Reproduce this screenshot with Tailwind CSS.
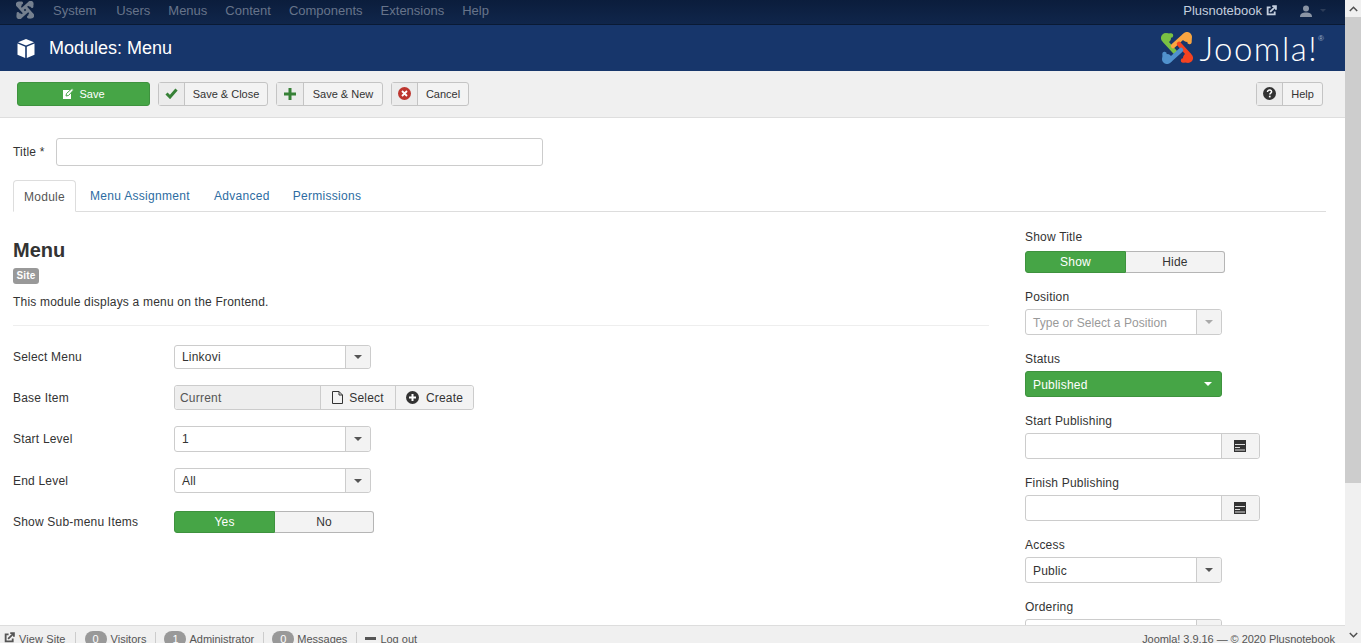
<!DOCTYPE html>
<html lang="en">
<head>
  <meta charset="UTF-8">
  <title>Modules: Menu</title>
  <script src="https://cdn.jsdelivr.net/npm/@tailwindcss/browser@4"></script>
</head>
<body class="bg-white text-[#333] font-['Liberation_Sans',Arial,sans-serif] text-[13px]">
  <div class="relative flex w-[1361px] h-[643px] overflow-hidden">
    <div class="w-[1345px] h-[643px] overflow-hidden flex flex-col shrink-0">

      <!-- Top nav -->
      <div class="h-[25px] shrink-0 flex items-center bg-gradient-to-b from-[#0b1d3c] to-[#10264b] border-b border-[#0a1a34] text-[13px] text-[#67748a] pb-[3px]">
        <svg class="ml-[16px] -mt-[1px] w-[18px] h-[18px]" viewBox="0 0 32 32" fill="#75808f" stroke="#75808f" stroke-width="5" stroke-linecap="round">
          <g><circle cx="5" cy="6" r="2.800" /><path fill="none" d="M10 3.500C6 3 3 6 4 9L14 20"/></g>
          <g transform="rotate(90 16 16)"><circle cx="5" cy="6" r="2.800"/><path fill="none" d="M10 3.500C6 3 3 6 4 9L14 20"/></g>
          <g transform="rotate(180 16 16)"><circle cx="5" cy="6" r="2.800"/><path fill="none" d="M10 3.500C6 3 3 6 4 9L14 20"/></g>
          <g transform="rotate(270 16 16)"><circle cx="5" cy="6" r="2.800"/><path fill="none" d="M10 3.500C6 3 3 6 4 9L14 20"/></g>
        </svg>
        <div class="ml-[19px] flex gap-[18px]">
          <span class="mr-[2px]">System</span><span>Users</span><span>Menus</span><span>Content</span><span>Components</span><span>Extensions</span><span>Help</span>
        </div>
        <div class="ml-auto flex items-center text-[#c3cede]">
          <span>Plusnotebook</span>
          <svg class="ml-[4px] w-[11px] h-[11px]" viewBox="0 0 12 12" fill="none" stroke="#c3cede" stroke-width="2"><path d="M9.500 7v3.200H1.800V2.500H5"/><path d="M4.500 7.500 10 2M6.800 1.200h4v4" /></svg>
          <svg class="ml-[23px] w-[12px] h-[12px]" viewBox="0 0 12 12" fill="#8a94a4"><circle cx="6" cy="3.400" r="3"/><path d="M0 12c0-3.500 2.500-4.500 6-4.500s6 1 6 4.500z"/></svg>
          <span class="ml-[8px] mr-[19px] w-0 h-0 border-x-[3px] border-x-transparent border-t-[3px] border-t-[#2c3c58]"></span>
        </div>
      </div>

      <!-- Title bar -->
      <div class="h-[46px] shrink-0 flex items-center bg-[#17366b] text-white">
        <svg class="ml-[17px] w-[18px] h-[19px]" viewBox="0 0 18 19" fill="#fff"><path d="M9 0 17 3.200 9 6.400 1 3.200z"/><path d="M.5 4.600 8.200 7.700V19L.5 15.800z"/><path d="M17.500 4.600 9.800 7.700V19l7.700-3.200z"/></svg>
        <h1 class="ml-[14px] text-[18px] leading-[24px]">Modules: Menu</h1>
        <div class="ml-auto mr-[21px] flex items-center h-[36px]">
          <svg class="w-[32px] h-[32px]" viewBox="0 0 32 32" stroke-width="4.500" stroke-linecap="round" fill="none">
            <g stroke="#7ac143"><circle cx="5" cy="6" r="2.800" fill="#7ac143"/><path d="M10 3.500C6 3 3 6 4 9L14 20"/></g>
            <g stroke="#f9a541" transform="rotate(90 16 16)"><circle cx="5" cy="6" r="2.800" fill="#f9a541"/><path d="M10 3.500C6 3 3 6 4 9L14 20"/></g>
            <g stroke="#f44321" transform="rotate(180 16 16)"><circle cx="5" cy="6" r="2.800" fill="#f44321"/><path d="M10 3.500C6 3 3 6 4 9L14 20"/></g>
            <g stroke="#5091cd" transform="rotate(270 16 16)"><circle cx="5" cy="6" r="2.800" fill="#5091cd"/><path d="M10 3.500C6 3 3 6 4 9L14 20"/></g>
          </svg>
          <span class="ml-[7px] font-['Lato',sans-serif] font-light text-[33px] leading-[36px] tracking-[1.500px]">Joomla!</span>
          <span class="text-[8px] text-[#9fb0c8] self-start mt-[3px]">®</span>
        </div>
      </div>

      <!-- Toolbar -->
      <div class="h-[47px] shrink-0 flex items-center bg-[#f0f0f0] border-b border-[#dedede] px-[17px] pb-[1px] gap-[8px] text-[11px]">
        <button class="w-[133px] h-[24px] flex items-center justify-center gap-[5px] rounded-[3px] bg-[#46a546] border border-[#3e923e] text-white">
          <svg class="w-[12px] h-[12px]" viewBox="0 0 12 12"><path d="M1 2h8v9H1z" fill="#fff"/><path d="M4 8l.5-2.500L10 .5l1.500 1.500L6.500 7.500z" fill="#fff" stroke="#46a546"/></svg>
          <span class="pt-[1px]">Save</span>
        </button>
        <button class="w-[110px] h-[24px] flex items-center rounded-[3px] bg-[#f3f3f3] border border-[#c4c4c4]">
          <span class="w-[26px] h-full flex items-center justify-center bg-[#ececec] border-r border-[#c4c4c4]">
            <svg class="w-[13px] h-[11px]" viewBox="0 0 13 11" fill="none" stroke="#378137" stroke-width="3"><path d="M1.500 5.500 5 9l6.500-7.500"/></svg>
          </span>
          <span class="flex-1 text-center pt-[2px]">Save &amp; Close</span>
        </button>
        <button class="w-[107px] h-[24px] flex items-center rounded-[3px] bg-[#f3f3f3] border border-[#c4c4c4]">
          <span class="w-[27px] h-full flex items-center justify-center bg-[#ececec] border-r border-[#c4c4c4]">
            <svg class="w-[12px] h-[12px]" viewBox="0 0 12 12" fill="#378137"><path d="M4.500 0h3v4.500H12v3H7.500V12h-3V7.500H0v-3h4.500z"/></svg>
          </span>
          <span class="flex-1 text-center pt-[2px]">Save &amp; New</span>
        </button>
        <button class="w-[78px] h-[24px] flex items-center rounded-[3px] bg-[#f3f3f3] border border-[#c4c4c4]">
          <span class="w-[26px] h-full flex items-center justify-center bg-[#ececec] border-r border-[#c4c4c4]">
            <svg class="w-[13px] h-[13px]" viewBox="0 0 13 13"><circle cx="6.500" cy="6.500" r="6.500" fill="#bd362f"/><path d="M4 4l5 5M9 4l-5 5" stroke="#fff" stroke-width="1.800"/></svg>
          </span>
          <span class="flex-1 text-center pt-[2px]">Cancel</span>
        </button>
        <button class="ml-auto mr-[5px] w-[67px] h-[24px] flex items-center rounded-[3px] bg-[#f3f3f3] border border-[#c4c4c4]">
          <span class="w-[26px] h-full flex items-center justify-center bg-[#ececec] border-r border-[#c4c4c4]">
            <svg class="w-[13px] h-[13px]" viewBox="0 0 13 13"><circle cx="6.500" cy="6.500" r="6.500" fill="#333"/><path d="M4.500 5c0-1.300 1-2 2.100-2s2 .7 2 1.800c0 1.400-1.800 1.300-1.800 2.700" fill="none" stroke="#fff" stroke-width="1.500"/><rect x="5.900" y="8.700" width="1.700" height="1.700" fill="#fff"/></svg>
          </span>
          <span class="flex-1 text-center pt-[2px]">Help</span>
        </button>
      </div>

      <!-- Form -->
      <div class="pl-[13px] pr-[19px] tracking-[0.2px]">
        <div class="mt-[20px] flex items-center h-[28px]">
          <label class="w-[43px] text-[12px]">Title *</label>
          <input type="text" class="w-[487px] h-[28px] bg-white border border-[#ccc] rounded-[3px]">
        </div>

        <!-- Tabs -->
        <div class="mt-[14px] h-[32px] flex border-b border-[#ddd] text-[12px] text-[#2d6ca2] tracking-[0.3px]">
          <span class="w-[63px] h-[32px] pt-[1px] flex items-center justify-center bg-white border border-[#ddd] border-b-white rounded-t-[4px] text-[#555]">Module</span>
          <span class="ml-[14px] h-[31px] pt-[1px] flex items-center">Menu Assignment</span>
          <span class="ml-[24px] h-[31px] pt-[1px] flex items-center">Advanced</span>
          <span class="ml-[23px] h-[31px] pt-[1px] flex items-center">Permissions</span>
        </div>

        <div class="flex">
          <!-- Module details -->
          <div class="w-[976px] shrink-0">
            <h2 class="mt-[26px] h-[24px] text-[20px] leading-[24px] font-bold tracking-normal">Menu</h2>
            <span class="mt-[6px] block w-[26px] h-[16px] rounded-[3px] bg-[#999] text-white text-[10px] font-bold leading-[16px] text-center">Site</span>
            <p class="mt-[9px] h-[17px] text-[12px] leading-[18px]">This module displays a menu on the Frontend.</p>
            <hr class="mt-[15px] border-[#eee]">

            <div class="mt-[19px] flex items-center text-[12px]">
              <label class="w-[161px]">Select Menu</label>
              <div class="w-[197px] h-[24px] flex bg-white border border-[#ccc] rounded-[3px]">
                <span class="flex-1 pl-[7px] leading-[22px]">Linkovi</span>
                <span class="w-[25px] flex items-center justify-center bg-[#f3f3f3] border-l border-[#ccc] rounded-r-[3px]"><i class="w-0 h-0 border-x-[4px] border-x-transparent border-t-[4px] border-t-[#555]"></i></span>
              </div>
            </div>
            <div class="mt-[16px] flex items-center text-[12px]">
              <label class="w-[161px]">Base Item</label>
              <div class="w-[300px] h-[25px] flex border border-[#ccc] rounded-[3px]">
                <span class="w-[145px] pl-[5px] leading-[24px] bg-[#eee] text-[#555] rounded-l-[3px]">Current</span>
                <span class="w-[75px] flex items-center justify-center gap-[6px] bg-[#f3f3f3] border-l border-[#ccc]">
                  <svg class="w-[11px] h-[13px]" viewBox="0 0 11 13" fill="none" stroke="#333"><path d="M.5.5h6.500l3.500 3.500v8.500H.5z"/><path d="M7 .5V4h3.500"/></svg>
                  Select
                </span>
                <span class="flex-1 flex items-center justify-center gap-[7px] bg-[#f3f3f3] border-l border-[#ccc] rounded-r-[3px]">
                  <svg class="w-[13px] h-[13px]" viewBox="0 0 13 13"><circle cx="6.500" cy="6.500" r="6.500" fill="#333"/><path d="M5.500 3h2v2.500H10v2H7.500V10h-2V7.500H3v-2h2.500z" fill="#fff"/></svg>
                  Create
                </span>
              </div>
            </div>
            <div class="mt-[16px] flex items-center text-[12px]">
              <label class="w-[161px]">Start Level</label>
              <div class="w-[197px] h-[26px] flex bg-white border border-[#ccc] rounded-[3px]">
                <span class="flex-1 pl-[7px] leading-[24px]">1</span>
                <span class="w-[25px] flex items-center justify-center bg-[#f3f3f3] border-l border-[#ccc] rounded-r-[3px]"><i class="w-0 h-0 border-x-[4px] border-x-transparent border-t-[4px] border-t-[#555]"></i></span>
              </div>
            </div>
            <div class="mt-[16px] flex items-center text-[12px]">
              <label class="w-[161px]">End Level</label>
              <div class="w-[197px] h-[25px] flex bg-white border border-[#ccc] rounded-[3px]">
                <span class="flex-1 pl-[7px] leading-[24px]">All</span>
                <span class="w-[25px] flex items-center justify-center bg-[#f3f3f3] border-l border-[#ccc] rounded-r-[3px]"><i class="w-0 h-0 border-x-[4px] border-x-transparent border-t-[4px] border-t-[#555]"></i></span>
              </div>
            </div>
            <div class="mt-[18px] flex items-center text-[12px]">
              <label class="w-[161px]">Show Sub-menu Items</label>
              <div class="w-[200px] h-[22px] flex text-center leading-[20px]">
                <span class="w-[101px] bg-[#46a546] border border-[#3e923e] rounded-l-[3px] text-white">Yes</span>
                <span class="flex-1 bg-[#f3f3f3] border border-l-0 border-[#b5b5b5] rounded-r-[3px]">No</span>
              </div>
            </div>
          </div>

          <!-- Sidebar -->
          <div class="ml-[36px] pt-[17px] text-[12px]">
            <label class="block h-[16px] leading-[16px]">Show Title</label>
            <div class="mt-[6px] w-[200px] h-[22px] flex text-center leading-[20px]">
              <span class="w-[101px] bg-[#46a546] border border-[#3e923e] rounded-l-[3px] text-white">Show</span>
              <span class="flex-1 bg-[#f3f3f3] border border-l-0 border-[#b5b5b5] rounded-r-[3px]">Hide</span>
            </div>

            <label class="mt-[16px] block h-[16px] leading-[16px]">Position</label>
            <div class="mt-[4px] w-[197px] h-[26px] flex bg-white border border-[#ccc] rounded-[3px]">
              <span class="flex-1 pl-[7px] leading-[26px] text-[#999] tracking-[0.05px]">Type or Select a Position</span>
              <span class="w-[25px] flex items-center justify-center bg-[#f3f3f3] border-l border-[#ccc] rounded-r-[3px]"><i class="w-0 h-0 border-x-[4px] border-x-transparent border-t-[4px] border-t-[#aaa]"></i></span>
            </div>

            <label class="mt-[16px] block h-[16px] leading-[16px]">Status</label>
            <div class="mt-[4px] w-[197px] h-[26px] flex items-center justify-between pl-[7px] pr-[9px] bg-[#46a546] border border-[#3e923e] rounded-[3px] text-white">
              <span class="pt-[1px]">Published</span>
              <i class="w-0 h-0 border-x-[4px] border-x-transparent border-t-[4px] border-t-white"></i>
            </div>

            <label class="mt-[16px] block h-[16px] leading-[16px]">Start Publishing</label>
            <div class="mt-[4px] w-[235px] h-[26px] flex bg-white border border-[#ccc] rounded-[3px]">
              <span class="flex-1"></span>
              <span class="w-[38px] pr-[2px] flex items-center justify-center bg-[#f3f3f3] border-l border-[#ccc] rounded-r-[3px]">
                <svg class="w-[12px] h-[12px]" viewBox="0 0 12 12"><rect width="12" height="12" fill="#333"/><path d="M1 4h10v1H1zM1 7h5v1H1zM1 9.500h10v1H1z" fill="#ddd"/></svg>
              </span>
            </div>

            <label class="mt-[16px] block h-[16px] leading-[16px]">Finish Publishing</label>
            <div class="mt-[4px] w-[235px] h-[26px] flex bg-white border border-[#ccc] rounded-[3px]">
              <span class="flex-1"></span>
              <span class="w-[38px] pr-[2px] flex items-center justify-center bg-[#f3f3f3] border-l border-[#ccc] rounded-r-[3px]">
                <svg class="w-[12px] h-[12px]" viewBox="0 0 12 12"><rect width="12" height="12" fill="#333"/><path d="M1 4h10v1H1zM1 7h5v1H1zM1 9.500h10v1H1z" fill="#ddd"/></svg>
              </span>
            </div>

            <label class="mt-[16px] block h-[16px] leading-[16px]">Access</label>
            <div class="mt-[4px] w-[197px] h-[26px] flex bg-white border border-[#ccc] rounded-[3px]">
              <span class="flex-1 pl-[7px] leading-[26px]">Public</span>
              <span class="w-[25px] flex items-center justify-center bg-[#f3f3f3] border-l border-[#ccc] rounded-r-[3px]"><i class="w-0 h-0 border-x-[4px] border-x-transparent border-t-[4px] border-t-[#555]"></i></span>
            </div>

            <label class="mt-[16px] block h-[16px] leading-[16px]">Ordering</label>
            <div class="mt-[4px] w-[197px] h-[26px] flex bg-white border border-[#ccc] rounded-[3px]">
              <span class="flex-1"></span>
              <span class="w-[25px] bg-[#f3f3f3] border-l border-[#ccc] rounded-r-[3px]"></span>
            </div>
          </div>
        </div>
      </div>
    </div>

    <!-- Status bar, sits over the form -->
    <div class="absolute left-0 top-[625px] w-[1345px] h-[18px] overflow-hidden flex items-start bg-[#f0f0f0] border-t border-[#ddd] text-[11px] text-[#555] whitespace-nowrap">
      <svg class="ml-[4px] mt-[6px] w-[11px] h-[11px]" viewBox="0 0 12 12" fill="none" stroke="#555" stroke-width="2"><path d="M9.500 7v3.200H1.800V2.500H5"/><path d="M4.500 7.500 10 2M6.800 1.200h4v4"/></svg>
      <span class="ml-[4px] mt-[5px] tracking-[0.1px]">View Site</span>
      <span class="ml-[9px] mt-[6px] w-px h-[12px] bg-[#ccc]"></span>
      <span class="ml-[9px] mt-[5px] w-[22px] h-[16px] rounded-[8px] bg-[#999] text-white text-center leading-[16px]">0</span>
      <span class="ml-[4px] mt-[5px]">Visitors</span>
      <span class="ml-[9px] mt-[6px] w-px h-[12px] bg-[#ccc]"></span>
      <span class="ml-[8px] mt-[5px] w-[22px] h-[16px] rounded-[8px] bg-[#999] text-white text-center leading-[16px]">1</span>
      <span class="ml-[3px] mt-[5px]">Administrator</span>
      <span class="ml-[9px] mt-[6px] w-px h-[12px] bg-[#ccc]"></span>
      <span class="ml-[8px] mt-[5px] w-[22px] h-[16px] rounded-[8px] bg-[#999] text-white text-center leading-[16px]">0</span>
      <span class="ml-[3px] mt-[5px]">Messages</span>
      <span class="ml-[9px] mt-[6px] w-px h-[12px] bg-[#ccc]"></span>
      <span class="ml-[8px] mt-[11px] w-[11px] h-[3px] bg-[#555]"></span>
      <span class="ml-[4px] mt-[5px]">Log out</span>
      <span class="ml-auto mr-[10px] mt-[5px] tracking-[-0.05px]">Joomla! 3.9.16 — © 2020 Plusnotebook</span>
    </div>

    <!-- Window scrollbar -->
    <div class="w-[16px] h-[643px] shrink-0 flex flex-col bg-[#f0f0f0]">
      <div class="h-[17px] flex items-center justify-center bg-[#f0f0f0]">
        <svg class="w-[9px] h-[6px]" viewBox="0 0 9 6" fill="none" stroke="#505050" stroke-width="1.500"><path d="M.8 5 4.500 1.300 8.200 5"/></svg>
      </div>
      <div class="h-[466px] bg-[#cdcdcd]"></div>
      <div class="mt-auto h-[17px] flex items-center justify-center">
        <svg class="w-[9px] h-[6px]" viewBox="0 0 9 6" fill="none" stroke="#505050" stroke-width="1.500"><path d="M.8 1 4.500 4.700 8.200 1"/></svg>
      </div>
    </div>
  </div>
</body>
</html>
